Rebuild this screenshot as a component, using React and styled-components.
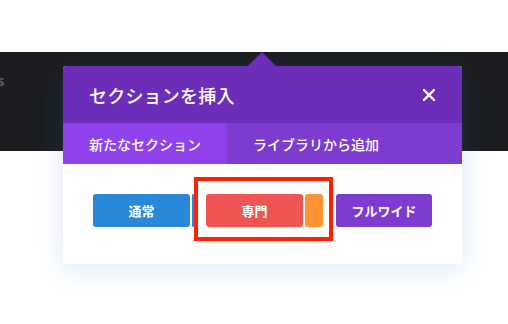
import styled, { createGlobalStyle } from 'styled-components';

const GlobalStyle = createGlobalStyle`
    html, body {
        margin: 0;
        padding: 0;
        background: #ffffff;
        font-family: "Noto Sans CJK JP", "Noto Sans", sans-serif;
    }
`;

const Page = styled.div`
    position: relative;
    width: 508px;
    height: 324px;
    overflow: hidden;
    padding-top: 52px;
    box-sizing: border-box;
`;

const DarkBand = styled.div`
    height: 99px;
    background: #1b1c1f;
    color: #5c5d60;
    font-family: "Open Sans", sans-serif;
    font-weight: 700;
    font-size: 15px;
    padding: 18px 0 0 0;
    box-sizing: border-box;
    text-indent: -3px;
`;

const Modal = styled.div`
    position: absolute;
    left: 63px;
    top: 66px;
    width: 399px;
    background: #fff;
    border-radius: 3px;
    box-shadow: 0 5px 30px rgba(43, 135, 218, 0.18);
`;

const Arrow = styled.div`
    position: absolute;
    top: -14px;
    left: 185px;
    width: 0;
    height: 0;
    border-left: 14px solid transparent;
    border-right: 14px solid transparent;
    border-bottom: 14px solid #6c2eb9;
`;

const Header = styled.div`
    height: 57px;
    background: #6c2eb9;
    display: flex;
    align-items: center;
    justify-content: space-between;
    padding: 0 27px 0 26px;
    border-radius: 3px 3px 0 0;
`;

const Title = styled.span`
    color: #fff;
    font-size: 18px;
    font-weight: 500;
    letter-spacing: 0.2px;
`;

const Close = styled.svg`
    width: 12px;
    height: 12px;
`;

const Tabs = styled.div`
    display: flex;
    height: 41px;
    background: #7e3bd0;
`;

const Tab = styled.div`
    width: ${(p) => (p.active ? '164px' : 'auto')};
    background: ${(p) => (p.active ? '#8f42ec' : 'transparent')};
    color: #fff;
    font-size: 14px;
    font-weight: 500;
    display: flex;
    align-items: center;
    padding-left: 26px;
    box-sizing: border-box;
`;

const Body = styled.div`
    display: flex;
    padding: 30px 30px 37px 30px;
`;

const Group = styled.div`
    position: relative;
    display: flex;
    gap: 2px;
    margin-right: ${(p) => p.gap || 0}px;
`;

const Btn = styled.div`
    width: ${(p) => p.w || 97}px;
    height: 33px;
    border-radius: 3px;
    background: ${(p) => p.color};
    color: #fff;
    font-size: 13px;
    font-weight: 700;
    display: flex;
    align-items: center;
    justify-content: center;
`;

const Highlight = styled.div`
    position: absolute;
    left: -12px;
    top: -17px;
    right: -10px;
    bottom: -14px;
    border: 4px solid #ff2105;
`;

export default function App() {
    return (
        <>
            <GlobalStyle />
            <Page>
                <DarkBand>s</DarkBand>
                <Modal>
                    <Arrow />
                    <Header>
                        <Title>セクションを挿入</Title>
                        <Close viewBox="0 0 12 12">
                            <path d="M1 1 L11 11 M11 1 L1 11" stroke="#fff" strokeWidth="2.4" strokeLinecap="square" />
                        </Close>
                    </Header>
                    <Tabs>
                        <Tab active>新たなセクション</Tab>
                        <Tab>ライブラリから追加</Tab>
                    </Tabs>
                    <Body>
                        <Group gap={12}>
                            <Btn color="#2b87da">通常</Btn>
                            <Btn color="#2b87da" w={2} />
                        </Group>
                        <Group gap={13}>
                            <Btn color="#ef5555">専門</Btn>
                            <Btn color="#ff9232" w={18} />
                            <Highlight />
                        </Group>
                        <Btn color="#7e3bd0">フルワイド</Btn>
                    </Body>
                </Modal>
            </Page>
        </>
    );
}
